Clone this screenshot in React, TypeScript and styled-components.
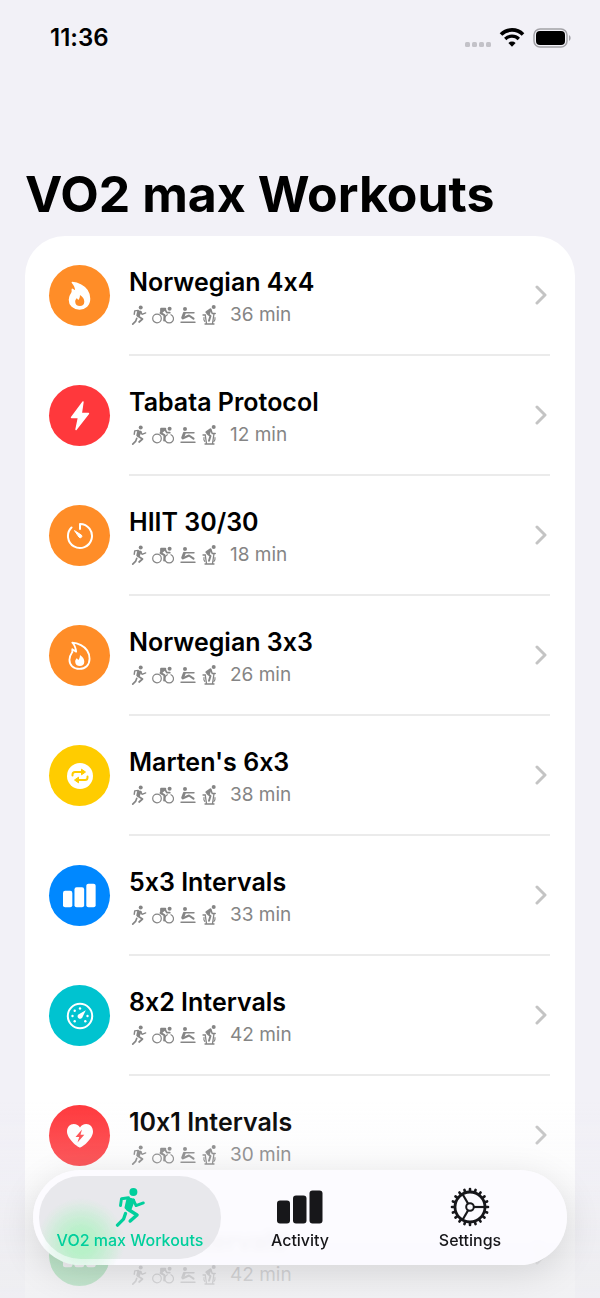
import React from "react";
import styled, { createGlobalStyle } from "styled-components";

const Global = createGlobalStyle`
  *, *::before, *::after { box-sizing: border-box; }
  body {
    margin: 0;
    background: #f2f1f7;
    font-family: Inter, "Liberation Sans", sans-serif;
    font-feature-settings: "calt" 0;
    color: #000;
  }
  button { font: inherit; color: inherit; border: 0; background: none; padding: 0; cursor: pointer; }
  h1, h2, p, ul { margin: 0; padding: 0; }
  svg { display: block; flex: none; }
`;

const Screen = styled.div`
  height: 100vh;
  overflow-y: auto;
  scrollbar-width: none;
  background: #f2f1f7;
`;

const StatusBar = styled.header`
  display: flex;
  align-items: center;
  justify-content: space-between;
  height: 76px;
  padding: 0 29px 0 50px;
`;

const Clock = styled.time`
  font-size: 24px;
  font-weight: 600;
  line-height: 28px;
`;

const StatusIcons = styled.div`
  display: flex;
  align-items: center;
  gap: 8px;
`;

const Title = styled.h1`
  padding: 88px 25px 12px;
  font-size: 50px;
  font-weight: 700;
  line-height: 60px;
  white-space: nowrap;
`;

const List = styled.ul`
  list-style: none;
  margin: 0 25px;
  background: #fff;
  border-radius: 40px 40px 0 0;
`;

const Row = styled.button`
  display: flex;
  align-items: stretch;
  gap: 19px;
  width: 100%;
  height: 120px;
  padding: 0 25px 0 24px;
  text-align: left;
`;

const Badge = styled.span<{ $color: string }>`
  flex: none;
  display: grid;
  place-items: center;
  align-self: center;
  width: 61px;
  height: 61px;
  margin-bottom: 1px;
  border-radius: 50%;
  background: ${(p) => p.$color};
  color: #fff;
`;

const RowBody = styled.span`
  flex: 1;
  display: flex;
  align-items: center;
  justify-content: space-between;
  padding-right: 3px;
  border-bottom: 2px solid #ebebeb;
`;

const RowText = styled.span`
  display: flex;
  flex-direction: column;
  gap: 1px;
  padding-top: 5px;
`;

const Name = styled.span`
  font-size: 25px;
  font-weight: 600;
  line-height: 34px;
`;

const Meta = styled.span`
  display: flex;
  align-items: center;
  line-height: 30px;
  font-size: 19px;
  color: #858585;
`;

const Duration = styled.span`
  margin-left: 13px;
`;

const Fade = styled.div`
  position: fixed;
  inset: auto 0 0;
  height: 220px;
  pointer-events: none;
  background: linear-gradient(
    rgba(238, 238, 241, 0) 10%,
    rgba(238, 238, 241, 0.2) 42%,
    rgba(236, 236, 239, 0.72) 80%,
    rgba(238, 238, 241, 0.8)
  );
`;

const TabBar = styled.nav`
  position: fixed;
  left: 33px;
  right: 33px;
  bottom: 33px;
  display: grid;
  grid-template-columns: repeat(3, 1fr);
  height: 95px;
  padding: 6px 12px;
  border-radius: 48px;
  background:
    radial-gradient(circle at 48px 76px, rgba(150, 235, 175, 0.45), rgba(150, 235, 175, 0) 40px),
    rgba(252, 251, 255, 0.93);
  backdrop-filter: blur(3px);
  box-shadow: 0 8px 36px rgba(0, 0, 0, 0.12);
`;

const Tab = styled.button<{ $active?: boolean }>`
  display: flex;
  flex-direction: column;
  align-items: center;
  margin: 0 -6px;
  padding-top: 11px;
  border-radius: 42px;
  font-size: 16px;
  font-weight: 500;
  line-height: 22px;
  gap: 2px;
  white-space: nowrap;
  && {
    color: ${(p) => (p.$active ? "#00cf9c" : "#17171a")};
    background: ${(p) =>
      p.$active
        ? "radial-gradient(circle at 42px 66px, rgba(180, 242, 198, 0.9) 12px, rgba(190, 240, 205, 0) 44px), rgba(226, 226, 229, 0.75)"
        : "transparent"};
  }
`;

const Runner = ({ size }: { size: number }) => (
  <svg width={size} height={size} viewBox="0 0 40 40" fill="none" stroke="currentColor" strokeLinecap="round" strokeLinejoin="round">
    <circle cx="23.400" cy="4.900" r="4" fill="currentColor" stroke="none" />
    <path d="M10.500 18.500l1-6.800 7-.9" strokeWidth="2.900" />
    <path d="M18 11.800l5.500 1.500-3.600 9.200-3.900-1.800z" fill="currentColor" strokeWidth="3" />
    <path d="M23.500 13l2.500 5.600 7.400-2.700" strokeWidth="2.800" />
    <path d="M17.500 22l9.500 6-6.800 6" strokeWidth="3.500" />
    <path d="M15.500 26.500l-2 5.700-6 6" strokeWidth="3.300" />
  </svg>
);

const Cyclist = () => (
  <svg width="22" height="20" viewBox="0 0 22 20" fill="none" stroke="currentColor" strokeLinecap="round" strokeLinejoin="round">
    <circle cx="5" cy="13.500" r="4.300" strokeWidth="1.200" />
    <path d="M15.300 9.700a4.300 4.300 0 1 0 3.700 0" strokeWidth="1.200" />
    <circle cx="17.600" cy="3.800" r="2" fill="currentColor" stroke="none" />
    <path d="M9.200 3.900h4l-4 3.600z" fill="currentColor" strokeWidth="2.200" />
    <path d="M13 4.500l1.800 3.200h3" strokeWidth="1.700" />
    <path d="M8.500 8l4 2.200-.3 5.300" strokeWidth="2" />
  </svg>
);

const Rower = () => (
  <svg width="16" height="20" viewBox="0 0 16 20" fill="none" stroke="currentColor" strokeLinecap="round" strokeLinejoin="round">
    <circle cx="5" cy="3.900" r="2" fill="currentColor" stroke="none" />
    <path d="M4.500 7.800h9.500" strokeWidth="1.400" />
    <path d="M4.300 8.300L2.600 12.800" strokeWidth="2.800" />
    <path d="M3 13.300l6-2.800 4.500 3.200" strokeWidth="2.100" />
    <path d="M1 17.200h14" strokeWidth="1.400" />
  </svg>
);

const IndoorCyclist = () => (
  <svg width="15" height="20" viewBox="0 0 15 20" fill="none" stroke="currentColor" strokeLinecap="round" strokeLinejoin="round">
    <circle cx="11.700" cy="2" r="2" fill="currentColor" stroke="none" />
    <path d="M4.500 7.200l4-2.800-1.500 4z" fill="currentColor" strokeWidth="2.200" />
    <path d="M9 5l1.200 3.400h3" strokeWidth="1.500" />
    <path d="M5.500 8.700l3 2.300-1.500 4.800" strokeWidth="2" />
    <path d="M1 10h2.500M3.300 10.500l1.200 8M12 8.600l-1.500 9.900M3 19h9" strokeWidth="1.300" />
    <path d="M2 12.500a4.500 4.500 0 0 0 .8 4M13 12.500a4.500 4.500 0 0 1-1.200 4" strokeWidth="1.100" />
  </svg>
);

const MetaIcons = styled.span`
  display: flex;
  align-items: center;
  gap: 6px;
  height: 20px;
  svg:first-child { margin-right: -3px; }
`;

const Chevron = () => (
  <svg width="12" height="20" viewBox="0 0 12 20" fill="none" stroke="#c4c4c4" strokeWidth="3" strokeLinecap="round" strokeLinejoin="round">
    <path d="M2 2l8 8-8 8" />
  </svg>
);

const Bars = ({ width, height }: { width: number; height: number }) => (
  <svg width={width} height={height} viewBox="0 0 46 34" fill="currentColor">
    <rect x="0" y="10.500" width="13" height="23" rx="3" />
    <rect x="16" y="5.500" width="13.500" height="28" rx="3" />
    <rect x="32.500" y="0.500" width="13" height="33" rx="3" />
  </svg>
);

const flameShape = "M4.500 1.500C4.500 1.500 22.500 3 22.500 18.500 22.500 25 18 29 12 29 5.500 29 1.500 25 1.500 19.500 1.500 15.500 3.500 13 4.500 11.500L4.500 8.500 8.500 11C8 7 7 4 4.500 1.500Z";
const innerFlame = "M12.500 14.500C15.500 16.500 17 18.800 17 21.500 17 24.500 15 26 12.500 26 9.500 26 7.500 24.200 7.500 21.500 7.500 19.700 8.300 18.500 9.300 17.800L10.700 19.800C12 18.500 12.500 16.500 12.500 14.500Z";

const FlameFilled = () => (
  <svg width="23" height="29" viewBox="0 0 24 30">
    <path d={flameShape} fill="#fff" stroke="#fff" strokeWidth="1.500" strokeLinejoin="round" />
    <path d={innerFlame} fill="#ff8d28" />
  </svg>
);

const FlameOutline = () => (
  <svg width="23" height="29" viewBox="0 0 24 30">
    <path d={flameShape} fill="none" stroke="#fff" strokeWidth="1.900" strokeLinejoin="round" />
    <path d={innerFlame} fill="#fff" />
  </svg>
);

const Bolt = () => (
  <svg width="20" height="30" viewBox="0 0 20 30" fill="#fff" stroke="#fff" strokeWidth="1.400" strokeLinejoin="round">
    <path d="M13 1L1.500 16.500H8.500L6 28.500 18.500 12.500H11.300Z" />
  </svg>
);

const Timer = () => (
  <svg width="28" height="28" viewBox="0 0 28 28" fill="none" stroke="#fff" strokeWidth="2" strokeLinecap="round" strokeLinejoin="round">
    <path d="M14 7V2A12 12 0 1 1 5.500 5.500" />
    <path d="M8.800 8.800l6.600 4.300a1.500 1.500 0 0 1-2.200 2.200z" fill="#fff" strokeWidth="1" />
  </svg>
);

const Repeat = () => (
  <svg width="26" height="26" viewBox="0 0 26 26">
    <circle cx="13" cy="13" r="13" fill="#fff" />
    <g fill="none" stroke="#ffcc00" strokeWidth="2" strokeLinecap="round">
      <path d="M5.500 12.500V11.500Q5.500 9 8 9H14.500" />
      <path d="M20.500 13.500V14.500Q20.500 17 18 17H11.500" />
    </g>
    <path d="M14.500 6.200V11.800L18.500 9ZM11.500 14.200V19.800L7.500 17Z" fill="#ffcc00" stroke="#ffcc00" strokeLinejoin="round" />
  </svg>
);

const Gauge = () => (
  <svg width="28" height="28" viewBox="0 0 28 28" fill="#fff">
    <circle cx="14" cy="14" r="12.200" fill="none" stroke="#fff" strokeWidth="2" />
    <path d="M19.800 8.200L16.300 15.500a2.500 2.500 0 1 1-3.900-3z" />
    <circle cx="14" cy="6.500" r="1.200" />
    <circle cx="8.700" cy="8.700" r="1.200" />
    <circle cx="6.500" cy="14" r="1.200" />
    <circle cx="8.700" cy="19.300" r="1.200" />
    <circle cx="19.300" cy="19.300" r="1.200" />
    <circle cx="21.500" cy="14" r="1.200" />
  </svg>
);

const HeartBolt = () => (
  <svg width="28" height="26" viewBox="0 0 28 26">
    <path d="M14 24.500C12 24.500 1 16 1 8.500 1 4 4 1 7.700 1 10.500 1 12.800 2.300 14 4.500 15.200 2.300 17.500 1 20.300 1 24 1 27 4 27 8.500 27 16 16 24.500 14 24.500Z" fill="#fff" />
    <path d="M16 6.500L9.500 14H13.200L11.500 19.500 18.300 11.800H14.500Z" fill="#ff4548" />
  </svg>
);

const Gear = () => {
  const teeth = Array.from({ length: 20 }, (_, i) => i * 18);
  return (
    <svg width="40" height="40" viewBox="-20 -20 40 40" fill="none" stroke="currentColor">
      <circle r="15" strokeWidth="2.800" />
      <circle r="3.800" strokeWidth="2" />
      {teeth.map((a) => (
        <path key={a} d="M15.500 0H18" strokeWidth="2.600" strokeLinecap="round" transform={`rotate(${a})`} />
      ))}
      {[0, 120, 240].map((a) => (
        <path key={a} d="M4 0H14.500" strokeWidth="2.200" transform={`rotate(${a})`} />
      ))}
    </svg>
  );
};

const SignalDots = () => (
  <svg width="26" height="20" viewBox="0 0 26 20" fill="#c3c2c8">
    {[0, 7, 14, 21].map((x) => (
      <rect key={x} x={x} y="14" width="5" height="5" rx="1.500" />
    ))}
  </svg>
);

const Wifi = () => (
  <svg width="26" height="20" viewBox="0 0 26 20" fill="none" stroke="#000">
    <path d="M2 6.500a15.600 15.600 0 0 1 22 0" strokeWidth="3.700" />
    <path d="M6.200 11a9.700 9.700 0 0 1 13.600 0" strokeWidth="3.300" />
    <path d="M13 18.700l-3.600-3.700a5.200 5.200 0 0 1 7.200 0z" fill="#000" stroke="none" />
  </svg>
);

const Battery = () => (
  <svg width="38" height="20" viewBox="0 0 38 20">
    <rect x="1" y="1" width="33" height="18" rx="6" fill="none" stroke="#a3a2a7" strokeWidth="1.500" />
    <rect x="3" y="3" width="29" height="14" rx="4" fill="#000" />
    <path d="M36 7a3.500 3.500 0 0 1 0 6z" fill="#a3a2a7" />
  </svg>
);

const workouts = [
  { name: "Norwegian 4x4", minutes: 36, color: "#ff8d28", icon: <FlameFilled /> },
  { name: "Tabata Protocol", minutes: 12, color: "#ff383c", icon: <Bolt /> },
  { name: "HIIT 30/30", minutes: 18, color: "#ff8d28", icon: <Timer /> },
  { name: "Norwegian 3x3", minutes: 26, color: "#ff8d28", icon: <FlameOutline /> },
  { name: "Marten's 6x3", minutes: 38, color: "#ffcc00", icon: <Repeat /> },
  { name: "5x3 Intervals", minutes: 33, color: "#0088ff", icon: <Bars width={33} height={25} /> },
  { name: "8x2 Intervals", minutes: 42, color: "#00c3d0", icon: <Gauge /> },
  { name: "10x1 Intervals", minutes: 30, color: "#ff383c", icon: <HeartBolt /> },
  { name: "6x5 Intervals", minutes: 42, color: "#34c759", icon: <Bars width={33} height={25} /> },
];

export default function App() {
  return (
    <Screen>
      <Global />
      <StatusBar>
        <Clock>11:36</Clock>
        <StatusIcons>
          <SignalDots />
          <Wifi />
          <Battery />
        </StatusIcons>
      </StatusBar>
      <main>
        <Title>VO2 max Workouts</Title>
        <List>
          {workouts.map((w) => (
            <li key={w.name}>
              <Row type="button">
                <Badge $color={w.color}>{w.icon}</Badge>
                <RowBody>
                  <RowText>
                    <Name>{w.name}</Name>
                    <Meta>
                      <MetaIcons>
                        <Runner size={20} />
                        <Cyclist />
                        <Rower />
                        <IndoorCyclist />
                      </MetaIcons>
                      <Duration>{w.minutes} min</Duration>
                    </Meta>
                  </RowText>
                  <Chevron />
                </RowBody>
              </Row>
            </li>
          ))}
        </List>
      </main>
      <Fade />
      <TabBar aria-label="Main">
        <Tab type="button" $active aria-current="page">
          <Runner size={40} />
          VO2 max Workouts
        </Tab>
        <Tab type="button">
          <Bars width={46} height={40} />
          Activity
        </Tab>
        <Tab type="button">
          <Gear />
          Settings
        </Tab>
      </TabBar>
    </Screen>
  );
}
